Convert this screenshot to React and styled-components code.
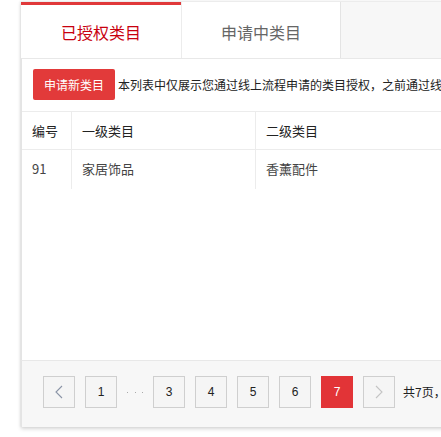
import styled, { createGlobalStyle } from 'styled-components';

const GlobalStyle = createGlobalStyle`
  html, body {
    margin: 0;
    padding: 0;
    background: #fff;
    overflow: hidden;
  }
  body {
    font-family: "Noto Sans CJK SC", "Liberation Sans", sans-serif;
    color: #333;
  }
`;

const Page = styled.div`
  padding: 1px 0 0 21px;
  width: 441px;
  height: 437px;
  box-sizing: border-box;
  overflow: hidden;
`;

const Panel = styled.div`
  width: 800px;
  background: #fff;
  box-shadow: 0 2px 4px rgba(0, 0, 0, 0.16), -1px 0 2px rgba(0, 0, 0, 0.06);
`;

const TabBar = styled.div`
  display: flex;
  height: 56px;
  background: #f7f7f7;
  border-top: 1px solid #ececec;
`;

const Tab = styled.div`
  width: 160px;
  box-sizing: border-box;
  display: flex;
  align-items: center;
  justify-content: center;
  background: #fff;
  font-size: 16px;
  line-height: 20px;
  padding-top: ${p => (p.$active ? '0' : '3px')};
  border-top: ${p => (p.$active ? '3px solid #e0383a' : 'none')};
  border-left: ${p => (p.$active ? 'none' : '1px solid #ececec')};
  border-right: ${p => (p.$active ? 'none' : '1px solid #e4e4e4')};
  color: ${p => (p.$active ? '#c8000e' : '#666')};
`;

const Body = styled.div`
  border-top: 1px solid #e8e8e8;
  border-left: 1px solid #e4e4e4;
  height: 302px;
  box-sizing: border-box;
  padding-top: 10px;
`;

const Toolbar = styled.div`
  display: flex;
  align-items: center;
  gap: 3px;
  padding-left: 11px;
  height: 31px;
`;

const PrimaryButton = styled.button`
  height: 31px;
  padding: 0 11px;
  border: none;
  border-radius: 2px;
  background: #e23a3a;
  color: #fff;
  font-family: inherit;
  font-size: 12px;
  line-height: 31px;
  white-space: nowrap;
`;

const Notice = styled.span`
  font-size: 12px;
  line-height: 16px;
  color: #222;
  white-space: nowrap;
`;

const Table = styled.div`
  margin-top: 11px;
  display: grid;
  grid-template-columns: 50px 184px 1fr;
  border-top: 1px solid #ececec;
`;

const Cell = styled.div`
  height: ${p => (p.$head ? '38px' : '39px')};
  display: flex;
  align-items: center;
  padding-left: 10px;
  padding-bottom: ${p => (p.$head ? '1px' : '2px')};
  box-sizing: border-box;
  font-size: 13px;
  color: ${p => (p.$head ? '#222' : '#444')};
  border-right: 1px solid #ececec;
  border-bottom: ${p => (p.$head ? '1px solid #ececec' : 'none')};
  &:nth-child(3n) {
    border-right: none;
  }
`;

const Footer = styled.div`
  height: 67px;
  box-sizing: border-box;
  background: #f7f7f7;
  border-top: 1px solid #e8e8e8;
  border-left: 1px solid #e4e4e4;
  padding: 15px 0 0 21px;
  display: flex;
  align-items: flex-start;
  gap: 10px;
`;

const PageBtn = styled.div`
  width: 32px;
  height: 32px;
  box-sizing: border-box;
  display: flex;
  align-items: center;
  justify-content: center;
  border: 1px solid ${p => (p.$current ? '#e23437' : '#cfcfcf')};
  background: ${p => (p.$current ? '#e23437' : '#f5f5f5')};
  color: ${p => (p.$current ? '#fff' : '#222')};
  font-family: "Liberation Sans", sans-serif;
  font-size: 12px;
  flex-shrink: 0;
`;

const Dots = styled.div`
  width: 16px;
  height: 32px;
  display: flex;
  align-items: center;
  justify-content: space-between;
  flex-shrink: 0;
  & > i {
    width: 1px;
    height: 1px;
    background: #aaa;
  }
`;

const Total = styled.span`
  height: 32px;
  line-height: 32px;
  font-size: 12px;
  color: #222;
  margin-left: -2px;
  white-space: nowrap;
`;

const Chevron = ({ dir, color }) => (
  <svg width="8" height="14" viewBox="0 0 8 14">
    <path
      d={dir === 'left' ? 'M7 1 L1 7 L7 13' : 'M1 1 L7 7 L1 13'}
      fill="none"
      stroke={color}
      strokeWidth="1.1"
    />
  </svg>
);

const rows = [{ id: 91, first: '家居饰品', second: '香薰配件' }];

export default function App() {
  return (
    <Page>
      <GlobalStyle />
      <Panel>
        <TabBar>
          <Tab $active>已授权类目</Tab>
          <Tab>申请中类目</Tab>
        </TabBar>
        <Body>
          <Toolbar>
            <PrimaryButton>申请新类目</PrimaryButton>
            <Notice>本列表中仅展示您通过线上流程申请的类目授权，之前通过线下申请的类目授权请联系您的招商经理查询。</Notice>
          </Toolbar>
          <Table>
            <Cell $head>编号</Cell>
            <Cell $head>一级类目</Cell>
            <Cell $head>二级类目</Cell>
            {rows.map(r => [
              <Cell key={r.id + 'a'}>{r.id}</Cell>,
              <Cell key={r.id + 'b'}>{r.first}</Cell>,
              <Cell key={r.id + 'c'}>{r.second}</Cell>,
            ])}
          </Table>
        </Body>
        <Footer>
          <PageBtn><Chevron dir="left" color="#8a94a6" /></PageBtn>
          <PageBtn>1</PageBtn>
          <Dots><i /><i /><i /></Dots>
          {[3, 4, 5, 6].map(n => <PageBtn key={n}>{n}</PageBtn>)}
          <PageBtn $current>7</PageBtn>
          <PageBtn><Chevron dir="right" color="#c4c4c4" /></PageBtn>
          <Total>共7页，到第 <input /></Total>
        </Footer>
      </Panel>
    </Page>
  );
}
